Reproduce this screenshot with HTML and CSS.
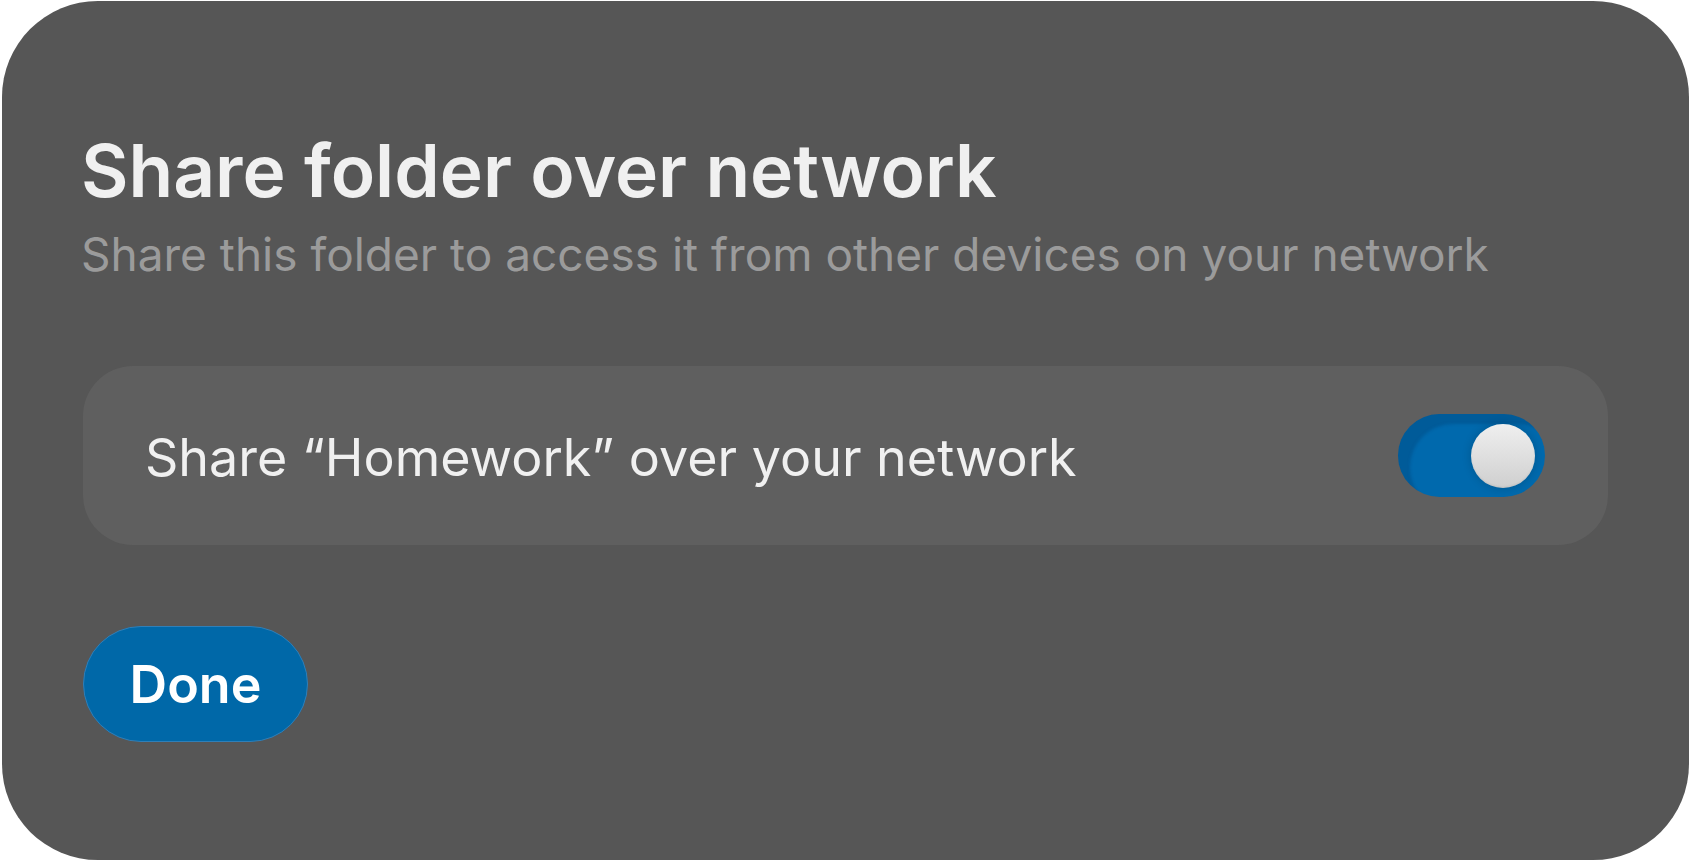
FILE: index.html
```html
<!DOCTYPE html>
<html lang="en">
<head>
    <meta charset="UTF-8">
    <meta name="viewport" content="width=device-width, initial-scale=1.0">
    <title>Share folder over network</title>
    <link rel="stylesheet" href="styles.css">
</head>
<body>
    <div class="dialog">
        <h1 class="dialog-title">Share folder over network</h1>
        <p class="dialog-subtitle">Share this folder to access it from other devices on your network</p>
        <div class="setting-row">
            <span class="setting-label">Share “Homework” over your network</span>
            <button class="switch on" role="switch" aria-checked="true" onclick="toggleSwitch(this)">
                <span class="switch-knob"></span>
            </button>
        </div>
        <button class="done-button">Done</button>
    </div>
    <script>
        function toggleSwitch(el) {
            el.classList.toggle('on');
            el.setAttribute('aria-checked', el.classList.contains('on'));
        }
    </script>
</body>
</html>
```

FILE: styles.css
```css
body {
    margin: 0;
    padding: 0;
    background-color: #ffffff;
    font-family: Inter, 'Noto Sans', sans-serif;
}
.dialog {
    box-sizing: border-box;
    width: 1687px;
    height: 859px;
    margin: 1px 1px 2px 2px;
    padding: 126px 81px 0 79px;
    background-color: #565656;
    border-radius: 96px;
    display: flex;
    flex-direction: column;
    align-items: flex-start;
}
.dialog-title {
    margin: 0;
    font-size: 73px;
    line-height: 88px;
    font-weight: 600;
    color: #f0f0f0;
}
.dialog-subtitle {
    margin: 14px 0 0 0;
    font-size: 46px;
    line-height: 50px;
    font-weight: 400;
    color: #9b9b9b;
}
.setting-row {
    box-sizing: border-box;
    align-self: stretch;
    height: 179px;
    margin: 87px 0 0 2px;
    padding: 4px 63px 0 62px;
    background-color: #5f5f5f;
    border-radius: 50px;
    display: flex;
    align-items: center;
    justify-content: space-between;
}
.setting-label {
    font-size: 52px;
    color: #f0f0f0;
}
.switch {
    box-sizing: border-box;
    width: 147px;
    height: 83px;
    margin-top: -4px;
    padding: 0 10px;
    border: none;
    border-radius: 42px;
    background-color: #5a5a5a;
    display: flex;
    align-items: center;
    justify-content: flex-start;
    cursor: pointer;
}
.switch.on {
    background-color: #0069ad;
    box-shadow: inset 14px 12px 3px -2px rgba(0, 40, 80, 0.22);
    justify-content: flex-end;
}
.switch-knob {
    width: 64px;
    height: 64px;
    border-radius: 50%;
    background: linear-gradient(180deg, #efefef 0%, #dcdcdc 60%, #cfcfcf 100%);
    box-shadow: 0 0 10px rgba(0, 0, 0, 0.18), inset 0 -1px 2px rgba(0, 0, 0, 0.08);
}
.done-button {
    box-sizing: border-box;
    width: 225px;
    height: 116px;
    margin: 81px 0 0 2px;
    border: 1px solid #2f7fb8;
    border-radius: 58px;
    background-color: #0068a8;
    color: #ffffff;
    font-family: Inter, 'Noto Sans', sans-serif;
    font-size: 52px;
    font-weight: 600;
    cursor: pointer;
}
```
